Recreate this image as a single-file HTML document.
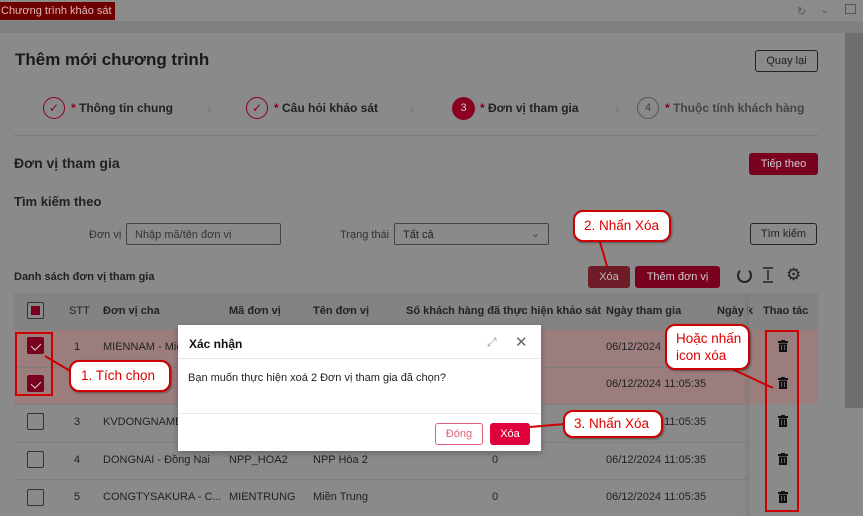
<!DOCTYPE html>
<html><head><meta charset="utf-8"><style>
*{box-sizing:border-box;margin:0;padding:0}
body{width:863px;height:516px;overflow:hidden;background:#8a8a8a;font-family:"Liberation Sans",Arial,sans-serif;color:#1a1a1a;position:relative;font-size:11px}
.a{position:absolute}
.btn{position:absolute;border-radius:3px;font-size:11px;display:flex;align-items:center;justify-content:center}
.hd{font-size:11px;font-weight:bold;color:#222}
.cb{position:absolute;width:17px;height:17px;border:1px solid #333;border-radius:2px}
.cbs{background:#7a0020;border-color:#7a0020}
.cbs::after{content:"";position:absolute;left:5px;top:3px;width:5px;height:8px;border:solid #ddd;border-width:0 1px 1px 0;transform:rotate(45deg)}
.row{position:absolute;left:14px;width:734px;border-bottom:1px solid #7f7f7f}
.tr{position:absolute}
.call{position:absolute;background:#fff;border:2px solid #c00;border-radius:10px;color:#d00;font-size:13.5px;white-space:nowrap;box-shadow:1px 1px 2px rgba(0,0,0,.4)}
</style></head><body>
<div class="a" style="left:0;top:0;width:863px;height:21px;background:#8b8b8b"></div>
<div class="a" style="left:0;top:2px;width:115px;height:18px;background:#6e0000;color:#e0b8b8;font-size:11px;line-height:18px;padding-left:1px">Chương trình khảo sát</div>
<div class="a" style="left:797px;top:5px;color:#555;font-size:11px">↻</div>
<div class="a" style="left:820px;top:3px;color:#555;font-size:11px">⌄</div>
<div class="a" style="left:845px;top:4px;width:11px;height:10px;border:1px solid #555"></div>
<div class="a" style="left:0;top:21px;width:863px;height:12px;background:#7f8082"></div>
<div class="a" style="left:845px;top:33px;width:18px;height:375px;background:#6f6f6f"></div>
<div class="a" style="left:15px;top:50px;font-size:17px;font-weight:bold;color:#1a1a1a">Thêm mới chương trình</div>
<div class="btn" style="left:755px;top:50px;width:63px;height:22px;border:1px solid #222;color:#222">Quay lại</div>
<div class="a" style="left:43px;top:97px;width:22px;height:22px;border:1px solid #8a0020;border-radius:50%;color:#8a0020;text-align:center;line-height:20px;font-size:12px">✓</div>
<div class="a hd" style="left:71px;top:101px;font-size:12px"><span style="color:#8a0020">*</span> Thông tin chung</div>
<div class="a" style="left:207px;top:100px;color:#777;font-size:15px">›</div>
<div class="a" style="left:246px;top:97px;width:22px;height:22px;border:1px solid #8a0020;border-radius:50%;color:#8a0020;text-align:center;line-height:20px;font-size:12px">✓</div>
<div class="a hd" style="left:274px;top:101px;font-size:12px"><span style="color:#8a0020">*</span> Câu hỏi khảo sát</div>
<div class="a" style="left:410px;top:100px;color:#777;font-size:15px">›</div>
<div class="a" style="left:452px;top:97px;width:23px;height:23px;background:#8a0020;border-radius:50%;color:#ccc;text-align:center;line-height:23px;font-size:11px">3</div>
<div class="a hd" style="left:480px;top:101px;font-size:12px"><span style="color:#8a0020">*</span> Đơn vị tham gia</div>
<div class="a" style="left:615px;top:100px;color:#777;font-size:15px">›</div>
<div class="a" style="left:637px;top:97px;width:22px;height:22px;border:1px solid #555;border-radius:50%;color:#444;text-align:center;line-height:20px;font-size:11px">4</div>
<div class="a hd" style="left:665px;top:101px;font-size:12px;color:#444"><span style="color:#8a0020">*</span> Thuộc tính khách hàng</div>
<div class="a" style="left:14px;top:135px;width:804px;height:1px;background:#7a7a7a"></div>
<div class="a hd" style="left:14px;top:155px;font-size:14px">Đơn vị tham gia</div>
<div class="btn" style="left:749px;top:153px;width:69px;height:22px;background:#7a0020;color:#ccc">Tiếp theo</div>
<div class="a hd" style="left:14px;top:194px;font-size:13px">Tìm kiếm theo</div>
<div class="a" style="left:89px;top:229px;color:#333">Đơn vị</div>
<div class="a" style="left:126px;top:223px;width:155px;height:22px;border:1px solid #444;border-radius:2px;color:#333;padding:5px 8px">Nhập mã/tên đơn vị</div>
<div class="a" style="left:340px;top:229px;color:#333">Trạng thái</div>
<div class="a" style="left:394px;top:223px;width:155px;height:22px;border:1px solid #444;border-radius:2px;color:#222;padding:5px 8px">Tất cả<span style="position:absolute;right:8px;top:3px;color:#444">⌄</span></div>
<div class="btn" style="left:750px;top:223px;width:67px;height:22px;border:1px solid #222;color:#222">Tìm kiếm</div>
<div class="a hd" style="left:14px;top:271px">Danh sách đơn vị tham gia</div>
<div class="btn" style="left:588px;top:266px;width:42px;height:22px;background:#6e1d28;color:#bbb">Xóa</div>
<div class="btn" style="left:635px;top:266px;width:85px;height:22px;background:#7a0020;color:#ccc">Thêm đơn vị</div>
<div class="a" style="left:737px;top:268px;width:15px;height:15px;border:2px solid #222;border-top-color:transparent;border-radius:50%"></div>
<svg class="a" style="left:762px;top:267px" width="12" height="16"><g stroke="#222" stroke-width="1.5"><line x1="1" y1="1" x2="11" y2="1"/><line x1="1" y1="15" x2="11" y2="15"/><line x1="6" y1="3" x2="6" y2="13"/></g></svg>
<div class="a" style="left:786px;top:265px;font-size:17px;color:#222">⚙</div>
<div class="a" style="left:14px;top:293px;width:804px;height:37px;background:#838383"></div>
<div class="cb" style="left:27px;top:302px;background:#888"><div style="position:absolute;left:3px;top:3px;width:9px;height:9px;background:#7a0020"></div></div>
<div class="a hd" style="left:69px;top:305px;font-weight:normal">STT</div>
<div class="a hd" style="left:103px;top:305px">Đơn vị cha</div>
<div class="a hd" style="left:229px;top:305px">Mã đơn vị</div>
<div class="a hd" style="left:313px;top:305px">Tên đơn vị</div>
<div class="a hd" style="left:406px;top:305px">Số khách hàng đã thực hiện khảo sát</div>
<div class="a hd" style="left:606px;top:305px">Ngày tham gia</div>
<div class="a hd" style="left:717px;top:305px">Ngày k</div>
<div class="a" style="left:14px;top:330px;width:804px;height:74px;background:#9b7d7e"></div>
<div class="row" style="top:330px;height:38px"></div>
<div class="row" style="top:368px;height:37px"></div>
<div class="row" style="top:405px;height:38px"></div>
<div class="row" style="top:443px;height:37px"></div>
<div class="cb cbs" style="left:27px;top:337px"></div>
<div class="cb cbs" style="left:27px;top:375px"></div>
<div class="cb" style="left:27px;top:413px"></div>
<div class="cb" style="left:27px;top:451px"></div>
<div class="cb" style="left:27px;top:489px"></div>
<div class="a" style="left:74px;top:341px;color:#222">1</div>
<div class="a" style="left:103px;top:341px;color:#222">MIENNAM - Miề</div>
<div class="a" style="left:74px;top:416px;color:#222">3</div>
<div class="a" style="left:103px;top:416px;color:#222">KVDONGNAMB</div>
<div class="a" style="left:74px;top:454px;color:#222">4</div>
<div class="a" style="left:103px;top:454px;color:#222">DONGNAI - Đồng Nai</div>
<div class="a" style="left:229px;top:454px;color:#222">NPP_HOA2</div>
<div class="a" style="left:313px;top:454px;color:#222">NPP Hòa 2</div>
<div class="a" style="left:492px;top:454px;color:#222">0</div>
<div class="a" style="left:74px;top:491px;color:#222">5</div>
<div class="a" style="left:103px;top:491px;color:#222">CONGTYSAKURA - C...</div>
<div class="a" style="left:229px;top:491px;color:#222">MIENTRUNG</div>
<div class="a" style="left:313px;top:491px;color:#222">Miền Trung</div>
<div class="a" style="left:492px;top:491px;color:#222">0</div>
<div class="a" style="left:606px;top:341px;color:#222">06/12/2024</div>
<div class="a" style="left:606px;top:378px;color:#222">06/12/2024 11:05:35</div>
<div class="a" style="left:606px;top:416px;color:#222">06/12/2024 11:05:35</div>
<div class="a" style="left:606px;top:454px;color:#222">06/12/2024 11:05:35</div>
<div class="a" style="left:606px;top:491px;color:#222">06/12/2024 11:05:35</div>
<div class="a" style="left:748px;top:293px;width:1px;height:223px;background:#7c7c7c;box-shadow:-2px 0 3px rgba(0,0,0,.15)"></div>
<div class="a hd" style="left:763px;top:305px">Thao tác</div>
<svg class="a" style="left:0;top:0" width="863" height="516"><defs><g id="t"><rect x="0" y="1" width="10" height="2" fill="#111"/><rect x="3" y="0" width="4" height="2" fill="#111"/><path d="M1 3.5h8v8.5h-8z" fill="#111"/><path d="M3.5 5v5M6.5 5v5" stroke="#777" stroke-width=".8"/></g></defs>
<use href="#t" x="778" y="340"/><use href="#t" x="778" y="377"/><use href="#t" x="778" y="415"/><use href="#t" x="778" y="453"/><use href="#t" x="778" y="491"/></svg>
<div class="a" style="left:15px;top:332px;width:38px;height:64px;border:2px solid #c00"></div>
<div class="a" style="left:765px;top:330px;width:34px;height:182px;border:2px solid #c00"></div>
<div class="a" style="left:178px;top:325px;width:363px;height:126px;background:#fff;box-shadow:0 2px 6px rgba(0,0,0,.3)">
<div class="a" style="left:11px;top:12px;font-size:12px;font-weight:bold;color:#111">Xác nhận</div>
<div class="a" style="left:309px;top:10px;color:#999;font-size:12px">⤢</div>
<div class="a" style="left:337px;top:8px;color:#666;font-size:15px">✕</div>
<div class="a" style="left:0;top:33px;width:363px;height:1px;background:#e8e8e8"></div>
<div class="a" style="left:10px;top:47px;font-size:11px;color:#222">Bạn muốn thực hiện xoá 2 Đơn vị tham gia đã chọn?</div>
<div class="a" style="left:0;top:88px;width:363px;height:1px;background:#e8e8e8"></div>
<div class="btn" style="left:257px;top:98px;width:48px;height:22px;border:1px solid #e0607a;color:#e0607a">Đóng</div>
<div class="btn" style="left:312px;top:98px;width:40px;height:22px;background:#e0003c;color:#fff">Xóa</div>
</div>
<svg class="a" style="left:0;top:0" width="863" height="516"><g stroke="#c00" stroke-width="2" fill="none">
<line x1="45" y1="356" x2="72" y2="372"/><line x1="530" y1="427" x2="565" y2="424"/><line x1="600" y1="242" x2="607" y2="266"/><line x1="730" y1="368" x2="773" y2="388"/></g></svg>
<div class="call" style="left:69px;top:360px;width:102px;height:32px;padding:6px 10px">1. Tích chọn</div>
<div class="call" style="left:573px;top:210px;width:98px;height:32px;padding:6px 9px">2. Nhấn Xóa</div>
<div class="call" style="left:563px;top:410px;width:100px;height:28px;padding:4px 9px">3. Nhấn Xóa</div>
<div class="call" style="left:665px;top:324px;width:85px;height:46px;padding:4px 9px;line-height:17px">Hoặc nhấn<br>icon xóa</div>
</body></html>
